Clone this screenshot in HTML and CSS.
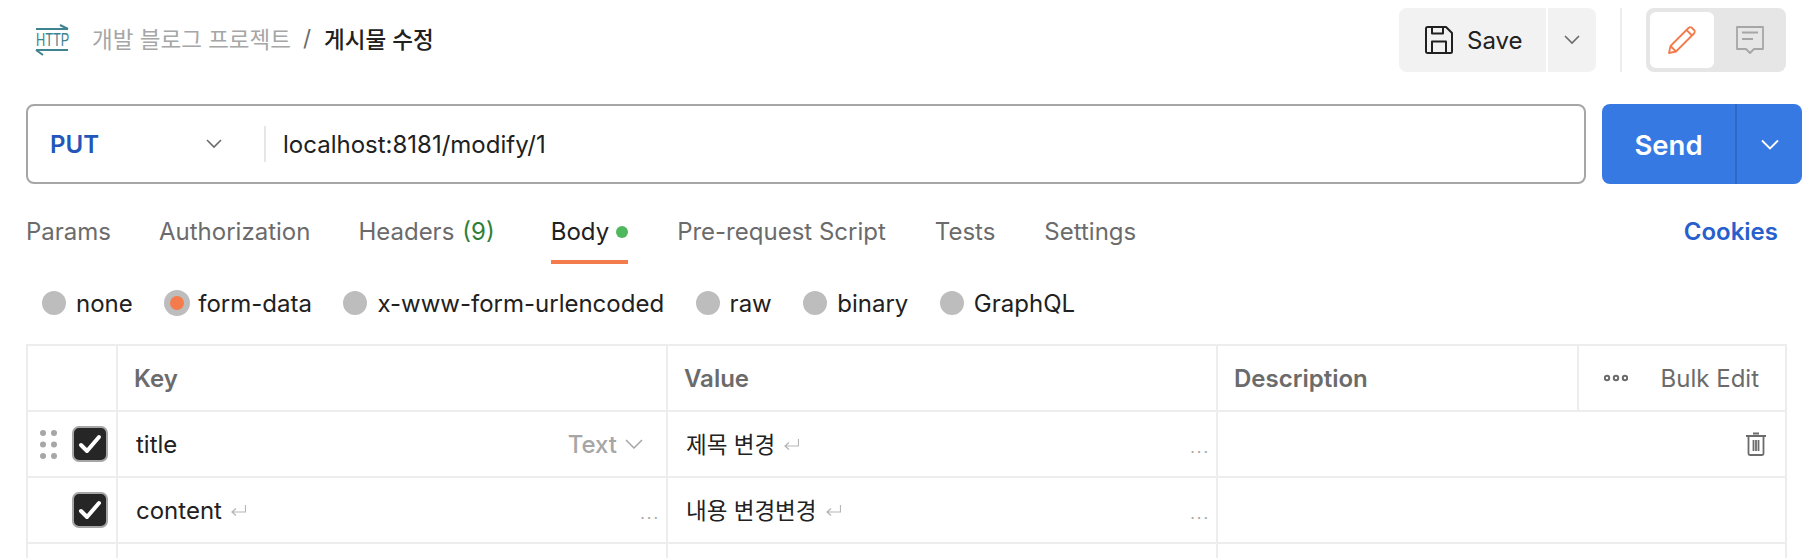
FILE: index.html
```html
<!DOCTYPE html>
<html lang="ko">
<head>
  <meta charset="UTF-8">
  <title>게시물 수정</title>
  <link rel="stylesheet" href="styles.css">
</head>
<body>
  <header class="top-bar">
    <div class="crumbs">
      <svg class="http-icon" width="34" height="32" viewBox="0 0 34 32">
        <path d="M1 5h32M25 1l8 4" fill="none" stroke="#3f8390" stroke-width="2"/>
        <text x="1" y="22.500" transform="scale(.71 1)" transform-origin="1 22.500">HTTP</text>
        <path d="M1 26h32M8 31l-7-5" fill="none" stroke="#3f8390" stroke-width="2"/>
      </svg>
      <span class="crumb-parent">개발 블로그 프로젝트</span>
      <span class="crumb-sep">/</span>
      <span class="crumb-current">게시물 수정</span>
    </div>
    <div class="actions">
      <button class="save-btn">
        <svg width="28" height="28" viewBox="0 0 28 28" fill="none" stroke="#212121" stroke-width="2" stroke-linejoin="round">
          <path d="M1 2.500C1 1.600 1.600 1 2.500 1H21l6 6v18.500c0 .9-.6 1.500-1.500 1.500h-23C1.600 27 1 26.400 1 25.500z"/>
          <path d="M7 1v6.500h11V1M7 27V15.500h14V27"/>
        </svg>
        Save
      </button>
      <button class="save-more">
        <svg width="16" height="10" viewBox="0 0 16 10"><path d="M1 1l7 7 7-7" fill="none" stroke="#6b6b6b" stroke-width="1.600"/></svg>
      </button>
      <div class="divider"></div>
      <div class="mode-toggle">
        <div class="mode on">
          <svg width="28" height="28" viewBox="0 0 28 28" fill="none" stroke="#f47b4c" stroke-width="1.800" stroke-linejoin="round">
            <path d="M1 27l1.500-7L20.500 2c1-1 2.500-1 3.500 0l2 2c1 1 1 2.500 0 3.500L8 25.500z"/>
            <path d="M18.500 4l5.500 5.500M2.500 20L8 25.500"/>
          </svg>
        </div>
        <div class="mode">
          <svg width="28" height="28" viewBox="0 0 28 28" fill="none" stroke="#a6a6a6" stroke-width="1.800" stroke-linejoin="round">
            <path d="M1 1h26v22H18l-4 4-4-4H1z"/>
            <path d="M6 6.500h16M6 13h11"/>
          </svg>
        </div>
      </div>
    </div>
  </header>

  <section class="request-row">
    <div class="url-box">
      <div class="method">
        <span>PUT</span>
        <svg width="16" height="10" viewBox="0 0 16 10"><path d="M1 1l7 7 7-7" fill="none" stroke="#6b6b6b" stroke-width="1.600"/></svg>
      </div>
      <div class="url">localhost:8181/modify/1</div>
    </div>
    <div class="send">
      <span class="send-label">Send</span>
      <span class="send-more">
        <svg width="18" height="11" viewBox="0 0 18 11"><path d="M1 1.500l8 8 8-8" fill="none" stroke="#fff" stroke-width="1.800"/></svg>
      </span>
    </div>
  </section>

  <nav class="tabs">
    <a class="tab">Params</a>
    <a class="tab">Authorization</a>
    <a class="tab">Headers<span class="count">(9)</span></a>
    <a class="tab active">Body<i class="dot"></i></a>
    <a class="tab">Pre-request Script</a>
    <a class="tab">Tests</a>
    <a class="tab">Settings</a>
    <a class="cookies">Cookies</a>
  </nav>

  <div class="body-types">
    <label class="radio"><i></i>none</label>
    <label class="radio checked"><i></i>form-data</label>
    <label class="radio"><i></i>x-www-form-urlencoded</label>
    <label class="radio"><i></i>raw</label>
    <label class="radio"><i></i>binary</label>
    <label class="radio"><i></i>GraphQL</label>
  </div>

  <div class="params">
    <div class="row head">
      <div class="cell c-check"></div>
      <div class="cell c-key">Key</div>
      <div class="cell c-value">Value</div>
      <div class="cell c-desc">Description</div>
      <div class="cell c-bulk">
        <svg width="24" height="8" viewBox="0 0 24 8" fill="none" stroke="#6b6b6b" stroke-width="2"><circle cx="3" cy="4" r="2.200"/><circle cx="12" cy="4" r="2.200"/><circle cx="21" cy="4" r="2.200"/></svg>
        <span>Bulk Edit</span>
      </div>
    </div>
    <div class="row">
      <div class="cell c-check">
        <svg class="grip" width="18" height="29" viewBox="0 0 18 29" fill="#a6a6a6"><circle cx="3" cy="3" r="3"/><circle cx="14" cy="3" r="3"/><circle cx="3" cy="14.500" r="3"/><circle cx="14" cy="14.500" r="3"/><circle cx="3" cy="26" r="3"/><circle cx="14" cy="26" r="3"/></svg>
        <span class="check"><svg width="24" height="20" viewBox="0 0 24 20"><path d="M3 11l6 6L21 3" fill="none" stroke="#fff" stroke-width="4" stroke-linecap="round" stroke-linejoin="round"/></svg></span>
      </div>
      <div class="cell c-key">
        <span>title</span>
        <span class="type">Text <svg width="18" height="10" viewBox="0 0 18 10"><path d="M1 1l8 8 8-8" fill="none" stroke="#a6a6a6" stroke-width="1.500"/></svg></span>
      </div>
      <div class="cell c-value">
        <span>제목 변경</span>
        <svg class="ret" width="15" height="11" viewBox="0 0 15 11"><path d="M14.500 0v7H1M5 3.500L1 7l4 3.500" fill="none" stroke="#b5b5b5" stroke-width="1.200"/></svg>
        <span class="more">...</span>
      </div>
      <div class="cell c-rest">
        <svg width="20" height="24" viewBox="0 0 20 24" fill="none" stroke="#6b6b6b" stroke-width="1.800"><path d="M0 4h20M7 1.500h6"/><path d="M2.500 4v17.500c0 1 .6 1.500 1.500 1.500h12c.9 0 1.500-.5 1.500-1.500V4M7.500 8v11M10 8v11M12.500 8v11"/></svg>
      </div>
    </div>
    <div class="row">
      <div class="cell c-check">
        <span class="check"><svg width="24" height="20" viewBox="0 0 24 20"><path d="M3 11l6 6L21 3" fill="none" stroke="#fff" stroke-width="4" stroke-linecap="round" stroke-linejoin="round"/></svg></span>
      </div>
      <div class="cell c-key">
        <span>content</span>
        <svg class="ret" width="15" height="11" viewBox="0 0 15 11"><path d="M14.500 0v7H1M5 3.500L1 7l4 3.500" fill="none" stroke="#b5b5b5" stroke-width="1.200"/></svg>
        <span class="more">...</span>
      </div>
      <div class="cell c-value">
        <span>내용 변경변경</span>
        <svg class="ret" width="15" height="11" viewBox="0 0 15 11"><path d="M14.500 0v7H1M5 3.500L1 7l4 3.500" fill="none" stroke="#b5b5b5" stroke-width="1.200"/></svg>
        <span class="more">...</span>
      </div>
      <div class="cell c-rest"></div>
    </div>
    <div class="row cut">
      <div class="cell c-check"></div>
      <div class="cell c-key"></div>
      <div class="cell c-value"></div>
      <div class="cell c-rest"></div>
    </div>
  </div>
</body>
</html>
```

FILE: styles.css
```css
* {
  margin: 0;
  padding: 0;
  box-sizing: border-box;
  font-family: Inter, "Noto Sans CJK KR", sans-serif;
}

html {
  background: #fff;
}

body {
  width: 1806px;
  height: 558px;
  overflow: hidden;
  color: #212121;
}

button {
  border: 0;
  font-size: 24px;
  color: #212121;
}

.top-bar {
  display: flex;
  justify-content: space-between;
  align-items: center;
  height: 64px;
  margin-top: 8px;
  padding: 0 20px 0 35px;
}

.crumbs {
  display: flex;
  align-items: center;
  font-family: "Noto Sans CJK KR", sans-serif;
  font-size: 22.500px;
}

.crumbs span {
  margin-bottom: 5px;
}

.http-icon {
  margin-right: 23px;
  overflow: visible;
}

.http-icon text {
  font-family: "Liberation Sans", sans-serif;
  font-size: 18px;
  fill: #3f8390;
}

.crumb-parent {
  color: #a6a6a6;
}

.crumbs .crumb-sep {
  margin: 0 13px 5px 12px;
  color: #6b6b6b;
}

.crumb-current {
  font-weight: 500;
}

.actions {
  display: flex;
  align-items: stretch;
  height: 64px;
}

.save-btn {
  display: flex;
  align-items: center;
  gap: 14px;
  width: 147px;
  padding-left: 26px;
  background: #f2f2f2;
  border-radius: 8px 0 0 8px;
}

.save-more {
  display: flex;
  align-items: center;
  justify-content: center;
  width: 48px;
  margin-left: 2px;
  background: #f2f2f2;
  border-radius: 0 8px 8px 0;
}

.divider {
  width: 2px;
  margin: 0 24px;
  background: #ededed;
}

.mode-toggle {
  display: flex;
  width: 140px;
  padding: 4px;
  background: #e6e6e6;
  border-radius: 8px;
}

.mode {
  display: flex;
  flex: 0 0 64px;
  align-items: center;
  justify-content: center;
  margin-right: 4px;
  border-radius: 6px;
}

.mode.on {
  background: #fff;
}

.request-row {
  display: flex;
  gap: 16px;
  height: 80px;
  margin-top: 32px;
  padding: 0 4px 0 26px;
}

.url-box {
  display: flex;
  align-items: center;
  flex: 1;
  border: 2px solid #a6a6a6;
  border-radius: 8px;
}

.method {
  display: flex;
  align-items: center;
  justify-content: space-between;
  width: 238px;
  height: 36px;
  padding: 0 42px 0 22px;
  border-right: 2px solid #e6e6e6;
  font-size: 24px;
  font-weight: 600;
  color: #2256b8;
}

.url {
  padding-left: 17px;
  font-size: 24px;
}

.send {
  display: flex;
  width: 200px;
  background: #3779e3;
  border-radius: 8px;
  color: #fff;
}

.send-label {
  width: 135px;
  border-right: 2px solid #2f69c6;
  font-size: 27.500px;
  font-weight: 600;
  line-height: 82px;
  text-align: center;
}

.send-more {
  display: flex;
  flex: 1;
  align-items: center;
  justify-content: center;
}

.tabs {
  display: flex;
  gap: 49px;
  align-items: stretch;
  height: 61px;
  margin-top: 19px;
  padding: 0 28px 0 26px;
  font-size: 24px;
}

.tab {
  display: flex;
  align-items: center;
  gap: 8px;
  height: 61px;
  padding-bottom: 4px;
  color: #6b6b6b;
}

.tab:nth-child(-n+2) {
  margin-right: -1px;
}

.tab.active {
  gap: 7px;
  border-bottom: 4px solid #f47b4c;
  padding-bottom: 0;
  color: #212121;
}

.count {
  margin-right: 7px;
  color: #2f7f3a;
}

.dot {
  width: 12px;
  height: 12px;
  border-radius: 50%;
  background: #4fb85f;
}

.cookies {
  display: flex;
  align-items: center;
  margin-left: auto;
  padding-bottom: 4px;
  font-weight: 600;
  color: #2760cc;
}

.body-types {
  display: flex;
  gap: 31.500px;
  height: 50px;
  align-items: center;
  margin-top: 14px;
  padding: 0 0 0 42px;
  font-size: 24px;
}

.radio {
  display: flex;
  align-items: center;
  gap: 10px;
}

.radio i {
  width: 24px;
  height: 24px;
  border-radius: 50%;
  background: #bdbdbd;
}

.radio.checked {
  gap: 8px;
}

.radio.checked i {
  width: 26px;
  height: 26px;
  border: 6px solid #bdbdbd;
  background: #f47b4c;
}

.params {
  margin: 16px 19px 0 26px;
  border: 2px solid #ededed;
  border-bottom: 0;
  font-size: 24px;
}

.row {
  display: flex;
  height: 66px;
  border-bottom: 2px solid #ededed;
}

.row.cut {
  height: 14px;
  border-bottom: 0;
}

.cell {
  display: flex;
  align-items: center;
  position: relative;
  border-right: 2px solid #ededed;
}

.c-check {
  flex: 0 0 90px;
  padding-left: 12px;
}

.c-key {
  flex: 0 0 550px;
  padding: 0 10px 0 18px;
}

.c-value {
  flex: 0 0 550px;
  padding: 0 10px 0 18px;
}

.head .cell {
  font-weight: 600;
  color: #6b6b6b;
}

.head .c-key,
.head .c-value {
  padding-left: 16px;
}

.c-desc {
  flex: 0 0 361px;
  padding-left: 16px;
}

.c-bulk {
  flex: 1;
  justify-content: space-between;
  padding: 0 26px 0 25px;
  border-right: 0;
}

.head .c-bulk {
  font-weight: 400;
}

.c-rest {
  flex: 1;
  justify-content: flex-end;
  padding-right: 19px;
  border-right: 0;
}

.c-value span:first-child {
  margin-bottom: 2px;
  font-family: "Noto Sans CJK KR", sans-serif;
  font-size: 22.500px;
}

.grip {
  margin-right: 14px;
}

.check {
  display: flex;
  align-items: center;
  justify-content: center;
  width: 36px;
  height: 36px;
  background: #262626;
  border: 2px solid #a6a6a6;
  border-radius: 7px;
}

.c-check .check:first-child {
  margin-left: 32px;
}

.type {
  display: flex;
  align-items: center;
  gap: 8px;
  margin-left: auto;
  margin-right: 13px;
  font-weight: 500;
  color: #a6a6a6;
}

.ret {
  margin-left: 9px;
}

.more {
  position: absolute;
  right: 6px;
  bottom: 21px;
  font-size: 16px;
  line-height: 16px;
  letter-spacing: 2px;
  color: #a6a6a6;
}
```
